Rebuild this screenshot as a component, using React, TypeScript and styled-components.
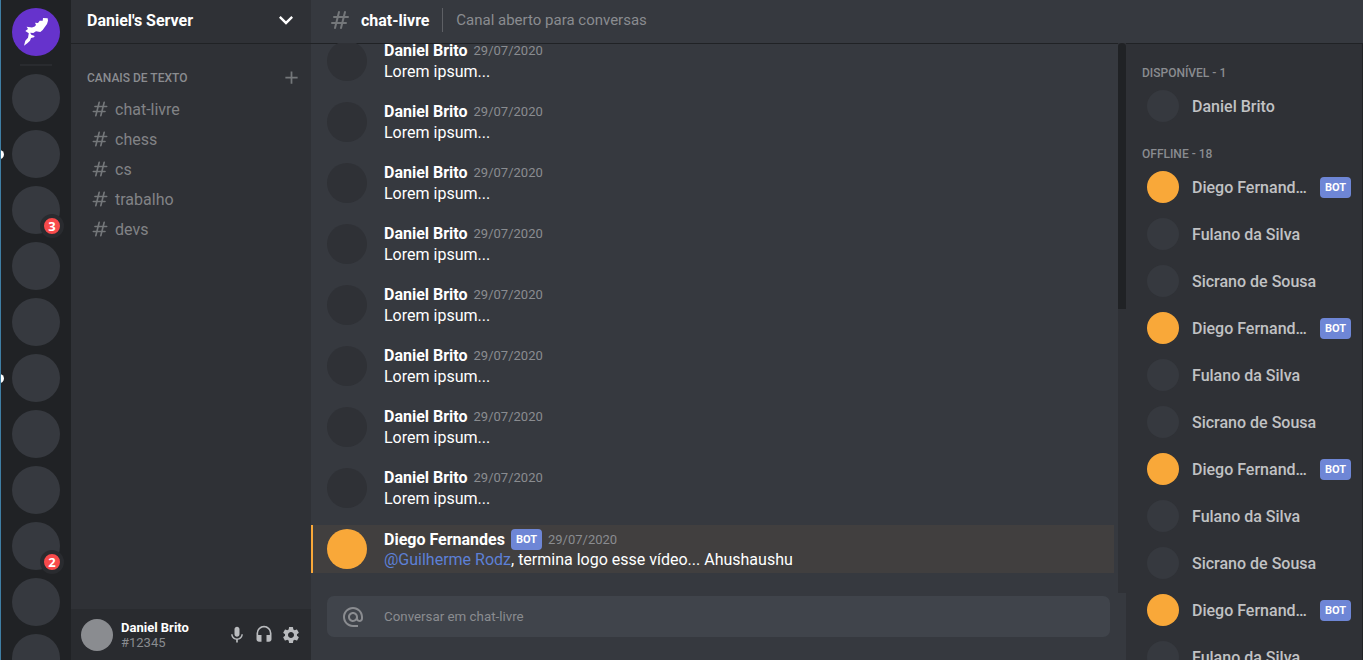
import React from "react";
import styled, { createGlobalStyle } from "styled-components";
import { MdMic, MdHeadset, MdSettings, MdExpandMore, MdAdd, MdAlternateEmail } from "react-icons/md";
import { HiOutlineHashtag } from "react-icons/hi";

const c = {
  primary: "#36393f",
  secondary: "#2f3136",
  tertiary: "#202225",
  quaternary: "#292b2f",
  white: "#fff",
  gray: "#8a8c90",
  senary: "#828386",
  input: "#40444b",
  symbol: "#74777a",
  notification: "#f84a4b",
  discord: "#6e86d6",
  mention: "#f9a839",
  mentionBg: "#413f3f",
  link: "#5d80d6",
  rocket: "#6633cc",
};

const GlobalStyle = createGlobalStyle`
  * { margin: 0; padding: 0; box-sizing: border-box; }
  html, body, #root { height: 100%; overflow: hidden; }
  body { font-family: Roboto, "Liberation Sans", sans-serif; color: ${c.white}; background: ${c.primary}; }
`;

const Layout = styled.div`
  display: grid;
  grid-template-columns: 70px 240px 1fr;
  height: 100vh;
  border-left: 1px solid #3f7ea3;
`;

const ServerList = styled.nav`
  display: flex;
  flex-direction: column;
  align-items: center;
  gap: 8px;
  padding-top: 8px;
  background: ${c.tertiary};
  overflow: hidden;
`;

const Server = styled.div<{ $home?: boolean }>`
  position: relative;
  display: flex;
  align-items: center;
  justify-content: center;
  flex: none;
  width: 48px;
  height: 48px;
  border-radius: 50%;
  background: ${(p) => (p.$home ? c.rocket : c.primary)};
`;

const Unread = styled.span`
  position: absolute;
  left: -17px;
  top: 20px;
  width: 9px;
  height: 9px;
  border-radius: 50%;
  background: ${c.white};
`;

const Mentions = styled.span`
  position: absolute;
  right: -4px;
  bottom: -4px;
  width: 24px;
  height: 24px;
  border: 4px solid ${c.quaternary};
  border-radius: 12px;
  background: ${c.notification};
  font-family: "Open Sans", Roboto, sans-serif;
  font-size: 13px;
  font-weight: 700;
  line-height: 16px;
  text-align: center;
`;

const Separator = styled.div`
  flex: none;
  width: 32px;
  height: 2px;
  background: ${c.quaternary};
`;

const Sidebar = styled.aside`
  display: flex;
  flex-direction: column;
  background: ${c.secondary};
`;

const ServerName = styled.header`
  display: flex;
  align-items: center;
  justify-content: space-between;
  height: 44px;
  padding: 0 11px 3px 16px;
  border-bottom: 1px solid ${c.tertiary};
  font-size: 16px;
  font-weight: 700;
`;

const Channels = styled.div`
  flex: 1;
  padding: 24px 9px 0 16px;
`;

const Category = styled.div`
  display: flex;
  align-items: center;
  justify-content: space-between;
  height: 20px;
  margin-bottom: 6px;
  font-size: 12px;
  font-weight: 500;
  color: ${c.gray};
  svg { margin-bottom: 1px; color: ${c.symbol}; }
`;

const Channel = styled.div`
  display: flex;
  align-items: center;
  gap: 5px;
  height: 30px;
  padding-left: 3px;
  font-size: 16px;
  color: ${c.senary};
  svg { color: ${c.symbol}; }
`;

const UserBar = styled.footer`
  display: flex;
  align-items: center;
  height: 51px;
  padding: 0 10px;
  background: ${c.quaternary};
`;

const Avatar = styled.div<{ $size: number; $color: string }>`
  flex: none;
  width: ${(p) => p.$size}px;
  height: ${(p) => p.$size}px;
  border-radius: 50%;
  background: ${(p) => p.$color};
`;

const UserData = styled.div`
  flex: 1;
  padding-left: 8px;
  font-size: 13px;
  line-height: 15px;
  strong { display: block; font-weight: 700; }
  span { color: ${c.gray}; }
`;

const UserActions = styled.div`
  display: flex;
  gap: 7px;
  color: #b9bbbe;
`;

const Main = styled.div`
  display: flex;
  flex-direction: column;
  min-width: 0;
  height: 100vh;
  background: ${c.primary};
`;

const ChannelInfo = styled.header`
  display: flex;
  align-items: center;
  flex: none;
  height: 44px;
  padding: 0 17px 3px;
  border-bottom: 1px solid ${c.tertiary};
  svg { color: ${c.symbol}; }
`;

const Title = styled.h1`
  margin-left: 9px;
  font-size: 16px;
  font-weight: 700;
`;

const Divider = styled.div`
  width: 1px;
  height: 24px;
  margin: 0 13.3px 0 12.5px;
  background: ${c.white};
  opacity: 0.2;
`;

const Topic = styled.span`
  font-size: 15px;
  color: ${c.gray};
`;

const Body = styled.div`
  display: flex;
  flex: 1;
  min-height: 0;
`;

const Chat = styled.main`
  display: flex;
  flex-direction: column;
  flex: 1;
  min-width: 0;
`;

const MessageArea = styled.div`
  display: flex;
  height: 550px;
  margin-top: -1px;
`;

const Messages = styled.div`
  display: flex;
  flex: 1;
  flex-direction: column;
  justify-content: flex-end;
  gap: 13px;
  padding: 0 4px 20px 0;
  overflow: hidden;
`;

const ScrollTrack = styled.div`
  width: 8px;
  background: ${c.secondary};
`;

const ScrollThumb = styled.div`
  height: 266px;
  border-radius: 4px 4px 0 0;
  background: ${c.tertiary};
`;

const Message = styled.article<{ $mention?: boolean }>`
  display: flex;
  align-items: center;
  flex: none;
  height: 48px;
  padding-left: ${(p) => (p.$mention ? 14 : 16)}px;
  border-left: ${(p) => (p.$mention ? `2px solid ${c.mention}` : "none")};
  background: ${(p) => (p.$mention ? c.mentionBg : "transparent")};
`;

const MessageText = styled.div`
  margin-left: 17px;
  font-size: 16px;
`;

const MessageHead = styled.div<{ $bot?: boolean }>`
  display: flex;
  align-items: center;
  height: 21px;
  padding-top: ${(p) => (p.$bot ? 2 : 0)}px;
  strong { font-weight: 700; }
  time { margin-left: 6px; font-size: 13px; color: ${c.gray}; }
`;

const Content = styled.p`
  line-height: 21px;
`;

const Mention = styled.span`
  color: ${c.link};
`;

const Bot = styled.span`
  margin-left: 6px;
  padding: 4px 5px;
  border-radius: 4px;
  background: ${c.discord};
  color: ${c.white};
  font-size: 11px;
  font-weight: 700;
  line-height: 13px;
`;

const InputBar = styled.div`
  display: flex;
  align-items: center;
  height: 41px;
  margin: 3px 16px 0;
  padding-left: 14px;
  border-radius: 7px;
  background: ${c.input};
  color: ${c.gray};
  font-size: 13.333px;
  svg { margin-right: 19px; }
`;

const Members = styled.aside`
  width: 237px;
  padding: 19px 11px 0 16px;
  background: ${c.secondary};
  border-right: 1px solid ${c.tertiary};
  overflow: hidden;
`;

const Role = styled.h2`
  height: 20px;
  margin: 0 0 7px;
  font-size: 12px;
  font-weight: 500;
  line-height: 20px;
  color: ${c.gray};
  & ~ & { margin-top: 22px; }
`;

const Member = styled.div`
  display: flex;
  align-items: center;
  height: 32px;
  padding-left: 5px;
  & + & { margin-top: 15px; }
`;

const MemberName = styled.strong`
  flex: 0 1 auto;
  min-width: 0;
  margin-left: 13px;
  overflow: hidden;
  text-overflow: ellipsis;
  white-space: nowrap;
  font-size: 16px;
  font-weight: 500;
  color: #c1c2c4;
  & + span { margin-left: 9px; }
`;

const Rocket = () => (
  <svg width="26" height="30" viewBox="0 0 26 30" fill="#fff">
    <path d="M20 1 L24.7 1.2 L25 3.7 L24 7 L22 9.7 L19.7 13 L17.3 15 L13 14.3 L10.3 16 L7.2 15.7 L8.3 17.7 L11.7 19 L11 20.3 L8 21 L7 23.7 L4.3 26.3 L1 28.8 L2.3 23.7 L5 20.7 L5.8 16.3 L2.3 14 L5 12 L3.6 9.7 L9 10.6 L11.7 9.5 L13 8 L12 5.8 L15 6 L16.7 3.7 L19.7 3.7 Z" />
  </svg>
);

const servers = [{}, { unread: true }, { mentions: 3 }, {}, {}, { unread: true }, {}, {}, { mentions: 2 }, {}, {}] as {
  unread?: boolean;
  mentions?: number;
}[];
const channels = ["chat-livre", "chess", "cs", "trabalho", "devs"];
const offline = Array.from({ length: 18 }, (_, i) => ["Diego Fernandes", "Fulano da Silva", "Sicrano de Sousa"][i % 3]);

export default function App() {
  return (
    <>
      <GlobalStyle />
      <Layout>
        <ServerList>
          <Server $home><Rocket /></Server>
          <Separator />
          {servers.map((s, i) => (
            <Server key={i}>
              {s.unread && <Unread />}
              {s.mentions && <Mentions>{s.mentions}</Mentions>}
            </Server>
          ))}
        </ServerList>
        <Sidebar>
          <ServerName>Daniel's Server<MdExpandMore size={28} /></ServerName>
          <Channels>
            <Category>CANAIS DE TEXTO<MdAdd size={21} /></Category>
            {channels.map((name) => (
              <Channel key={name}><HiOutlineHashtag size={20} />{name}</Channel>
            ))}
          </Channels>
          <UserBar>
            <Avatar $size={32} $color={c.gray} />
            <UserData><strong>Daniel Brito</strong><span>#12345</span></UserData>
            <UserActions><MdMic size={20} /><MdHeadset size={20} /><MdSettings size={20} /></UserActions>
          </UserBar>
        </Sidebar>
        <Main>
          <ChannelInfo>
            <HiOutlineHashtag size={24} />
            <Title>chat-livre</Title>
            <Divider />
            <Topic>Canal aberto para conversas</Topic>
          </ChannelInfo>
          <Body>
            <Chat>
              <MessageArea>
                <Messages>
                  {Array.from({ length: 8 }, (_, i) => (
                    <Message key={i}>
                      <Avatar $size={40} $color={c.secondary} />
                      <MessageText>
                        <MessageHead><strong>Daniel Brito</strong><time>29/07/2020</time></MessageHead>
                        <Content>Lorem ipsum...</Content>
                      </MessageText>
                    </Message>
                  ))}
                  <Message $mention>
                    <Avatar $size={40} $color={c.mention} />
                    <MessageText>
                      <MessageHead $bot><strong>Diego Fernandes</strong><Bot>BOT</Bot><time>29/07/2020</time></MessageHead>
                      <Content><Mention>@Guilherme Rodz</Mention>, termina logo esse vídeo... Ahushaushu</Content>
                    </MessageText>
                  </Message>
                </Messages>
                <ScrollTrack><ScrollThumb /></ScrollTrack>
              </MessageArea>
              <InputBar><MdAlternateEmail size={24} />Conversar em chat-livre</InputBar>
            </Chat>
            <Members>
              <Role>DISPONÍVEL - 1</Role>
              <Member><Avatar $size={32} $color={c.primary} /><MemberName>Daniel Brito</MemberName></Member>
              <Role>OFFLINE - 18</Role>
              {offline.map((name, i) => (
                <Member key={i}>
                  <Avatar $size={32} $color={i % 3 === 0 ? c.mention : c.primary} />
                  <MemberName>{name}</MemberName>
                  {i % 3 === 0 && <Bot>BOT</Bot>}
                </Member>
              ))}
            </Members>
          </Body>
        </Main>
      </Layout>
    </>
  );
}
